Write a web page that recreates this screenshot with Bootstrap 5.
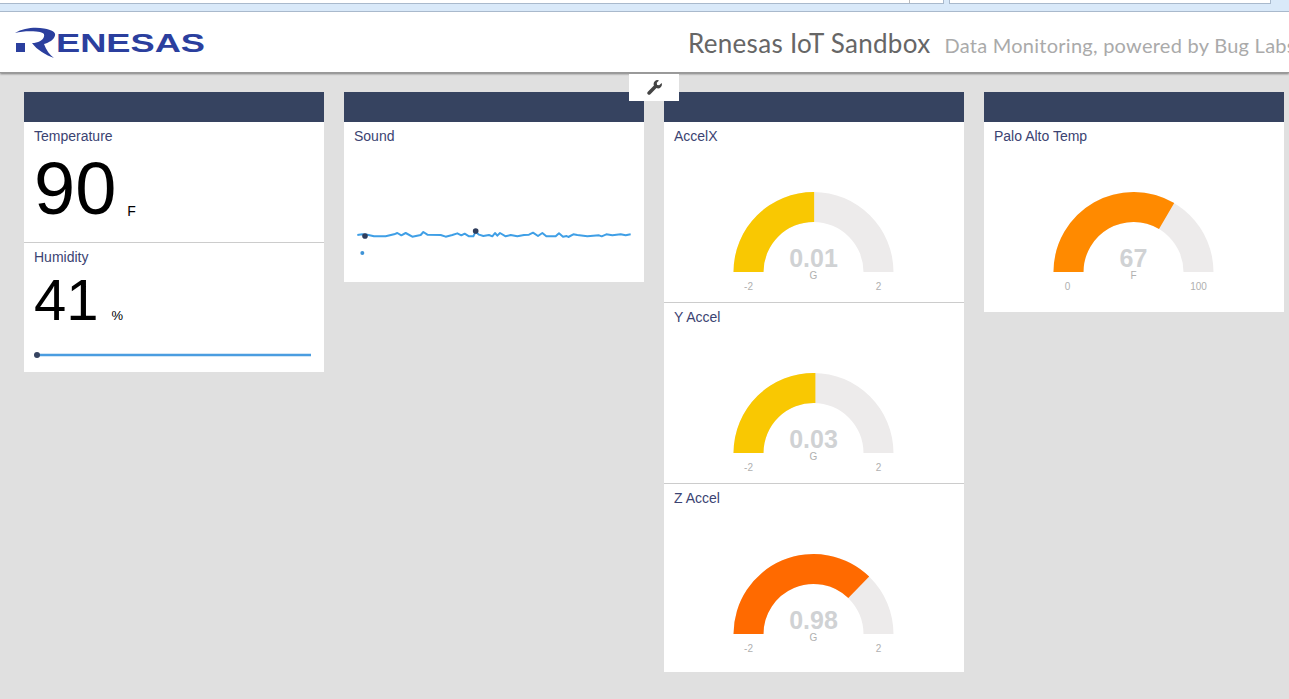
<!doctype html>
<html lang="en">
<head>
<meta charset="utf-8">
<title>Renesas IoT Sandbox</title>
<link rel="stylesheet" href="https://cdn.jsdelivr.net/npm/bootstrap@5.3.0/dist/css/bootstrap.min.css">
<style>
html,body{height:699px;overflow:hidden}
body{background:#e0e0e0;font-family:"Liberation Sans",Arial,sans-serif}
.chrome-strip{height:12px;background:#d9e9f9;border-bottom:1px solid #a9b9cc}
.chrome-box{height:4px;background:#fff;border:1px solid #a9b9cc;border-top:0}
.chrome-box-a{width:944px;border-left:0}
.chrome-box-a span{display:block;width:910px;height:3px;border-right:1px solid #bbb}
.chrome-box-b{width:322px;margin-left:5px}
.site-head{height:60px;background:#fff;box-shadow:0 1px 0 #999,0 2px 2px rgba(0,0,0,.45);position:relative;z-index:2;white-space:nowrap;overflow:hidden}
.logo-svg{width:220px;height:60px;flex:none}
.site-title{margin-left:468px;font-family:"Lato",sans-serif;font-size:26px;color:#666;letter-spacing:.3px;flex:none;padding-top:3px}
.site-sub{margin-left:14px;font-family:"Lato",sans-serif;font-size:20px;color:#aaa;letter-spacing:.26px;flex:none;padding-top:5px}
.board{padding:20px 0 0 24px;gap:20px;position:relative}
.tool-tab{position:absolute;left:629px;top:2px;width:50px;height:27px;background:#fff;z-index:3}
.tool-tab svg{width:15px;height:15px}
.tile{width:300px;flex:none}
.tile-head{height:30px;background:#364360}
.cell{background:#fff;overflow:hidden}
.cell+.cell{border-top:1px solid #ccc}
.cell-title{padding:6px 10px 0;font-size:14px;line-height:16px;color:#3b4372}
.h-temp{height:120px}.h-hum{height:130px}.h-sound{height:160px}.h-g{height:180px}.h-gb{height:181px}.h-z{height:189px}.h-palo{height:190px}
.big-num{padding-left:10px;line-height:1;color:#000}
.big-90{font-size:74px;margin-top:8px}
.big-41{font-size:58px;margin-top:6px}
.num-unit{color:#000}
.big-90 .num-unit{font-size:14px;margin-left:11px;vertical-align:-2px}
.big-41 .num-unit{font-size:13px;margin-left:13px}
.spark{display:block;width:300px}
.spark-hum{margin-top:16px}
.spark-sound{margin-top:67px}
.gauge{display:block;width:300px;height:104px;margin-top:46px}
.g-val{font:700 25px "Liberation Sans",sans-serif;fill:#d0d2d4;text-anchor:middle}
.g-small{font:10px "Liberation Sans",sans-serif;fill:#b0b0b0;text-anchor:middle}
</style>
</head>
<body>
<div class="chrome-strip d-flex align-items-start">
  <div class="chrome-box chrome-box-a"><span></span></div>
  <div class="chrome-box chrome-box-b"></div>
</div>
<header class="site-head d-flex align-items-center">
  <svg class="logo-svg" viewBox="0 12 220 60" role="img" aria-label="Renesas logo">
    <path fill="#2b3f9e" d="M15 33C24 27.5 36 27 44 28.5C52 30 56 32 55 35.5C54 40 49 42.5 44 44C46 50 50 55 54 58C46 55 37 50 32 43C38 43 43 40.5 44 36.5C45 33 42 32 36 31.5C28 31 21 31.5 15 33Z"/>
    <rect x="16" y="43" width="9" height="9" fill="#2b3f9e"/>
    <text x="56" y="52" font-family="Liberation Sans" font-weight="700" font-size="26" fill="#2b3f9e" textLength="149" lengthAdjust="spacingAndGlyphs">ENESAS</text>
  </svg>
  <span class="site-title">Renesas IoT Sandbox</span>
  <span class="site-sub">Data Monitoring, powered by Bug Labs</span>
</header>
<main class="board d-flex align-items-start">
  <div class="tool-tab d-flex align-items-center justify-content-center">
    <svg viewBox="0 0 16 16" aria-hidden="true"><path fill="#444" d="M15.6 3.2L13 5.6L10.8 5.2L10.4 3L12.8.4A4.2 4.2 0 0 0 7.4 5.9L.9 12.4A1.9 1.9 0 0 0 3.6 15.1L10.1 8.6A4.2 4.2 0 0 0 15.6 3.2Z"/></svg>
  </div>

  <section class="tile">
    <div class="tile-head"></div>
    <div class="cell h-temp">
      <div class="cell-title">Temperature</div>
      <div class="big-num big-90">90<span class="num-unit">F</span></div>
    </div>
    <div class="cell h-hum">
      <div class="cell-title">Humidity</div>
      <div class="big-num big-41">41<span class="num-unit">%</span></div>
      <svg class="spark spark-hum" height="20" viewBox="0 0 300 20" aria-hidden="true">
        <line x1="13" y1="10" x2="287" y2="10" stroke="#4a9de0" stroke-width="2.5"/>
        <circle cx="13" cy="10" r="3" fill="#364360"/>
      </svg>
    </div>
  </section>

  <section class="tile">
    <div class="tile-head"></div>
    <div class="cell h-sound">
      <div class="cell-title">Sound</div>
      <svg class="spark spark-sound" height="60" viewBox="0 0 900 180" aria-hidden="true">
        <polyline fill="none" stroke="#3f9fe6" stroke-width="6" stroke-linejoin="round" points="40,72 55,70 70,71 90,76 125,76 150,70 160,66 172,73 185,66 205,77 230,72 238,63 250,71 290,72 305,77 325,72 340,67 352,73 362,68 375,76 388,76 395,62 405,71 418,75 435,72 445,76 453,66 460,74 468,66 485,76 500,72 520,76 540,72 555,71 567,65 582,75 595,66 607,76 635,76 645,67 657,77 668,75 673,78 688,70 700,72 730,76 765,73 773,76 787,70 805,73 830,70 845,73 860,70"/>
        <circle cx="63" cy="75" r="8.5" fill="#2f3d5c"/>
        <circle cx="395" cy="60" r="8.5" fill="#2f3d5c"/>
        <circle cx="55" cy="126" r="6" fill="#3f93d6"/>
      </svg>
    </div>
  </section>

  <section class="tile">
    <div class="tile-head"></div>
    <div class="cell h-g">
      <div class="cell-title">AccelX</div>
      <svg class="gauge" viewBox="0.5 0 300 104" role="img">
        <path fill="#edebeb" d="M70 82A80 80 0 0 1 230 82H200A50 50 0 0 0 100 82Z"/>
        <path fill="#f9c802" d="M70 82A80 80 0 0 1 150.63 2V32A50 50 0 0 0 100 82Z"/>
        <text class="g-val" x="150" y="77">0.01</text>
        <text class="g-small" x="150" y="89">G</text>
        <text class="g-small" x="85" y="100">-2</text>
        <text class="g-small" x="215" y="100">2</text>
      </svg>
    </div>
    <div class="cell h-gb">
      <div class="cell-title">Y Accel</div>
      <svg class="gauge" viewBox="0.5 0 300 104" role="img">
        <path fill="#edebeb" d="M70 82A80 80 0 0 1 230 82H200A50 50 0 0 0 100 82Z"/>
        <path fill="#f9c802" d="M70 82A80 80 0 0 1 151.88 2.02V32.01A50 50 0 0 0 100 82Z"/>
        <text class="g-val" x="150" y="77">0.03</text>
        <text class="g-small" x="150" y="89">G</text>
        <text class="g-small" x="85" y="100">-2</text>
        <text class="g-small" x="215" y="100">2</text>
      </svg>
    </div>
    <div class="cell h-z">
      <div class="cell-title">Z Accel</div>
      <svg class="gauge" viewBox="0.5 0 300 104" role="img">
        <path fill="#edebeb" d="M70 82A80 80 0 0 1 230 82H200A50 50 0 0 0 100 82Z"/>
        <path fill="#ff6a00" d="M70 82A80 80 0 0 1 205.7 24.6L184.8 46.1A50 50 0 0 0 100 82Z"/>
        <text class="g-val" x="150" y="77">0.98</text>
        <text class="g-small" x="150" y="89">G</text>
        <text class="g-small" x="85" y="100">-2</text>
        <text class="g-small" x="215" y="100">2</text>
      </svg>
    </div>
  </section>

  <section class="tile">
    <div class="tile-head"></div>
    <div class="cell h-palo">
      <div class="cell-title">Palo Alto Temp</div>
      <svg class="gauge" viewBox="0.5 0 300 104" role="img">
        <path fill="#edebeb" d="M70 82A80 80 0 0 1 230 82H200A50 50 0 0 0 100 82Z"/>
        <path fill="#ff8a00" d="M70 82A80 80 0 0 1 190.7 13.1L175.5 39A50 50 0 0 0 100 82Z"/>
        <text class="g-val" x="150" y="77">67</text>
        <text class="g-small" x="150" y="89">F</text>
        <text class="g-small" x="84" y="100">0</text>
        <text class="g-small" x="215" y="100">100</text>
      </svg>
    </div>
  </section>
</main>
<script src="https://cdn.jsdelivr.net/npm/bootstrap@5.3.0/dist/js/bootstrap.bundle.min.js"></script>
</body>
</html>
